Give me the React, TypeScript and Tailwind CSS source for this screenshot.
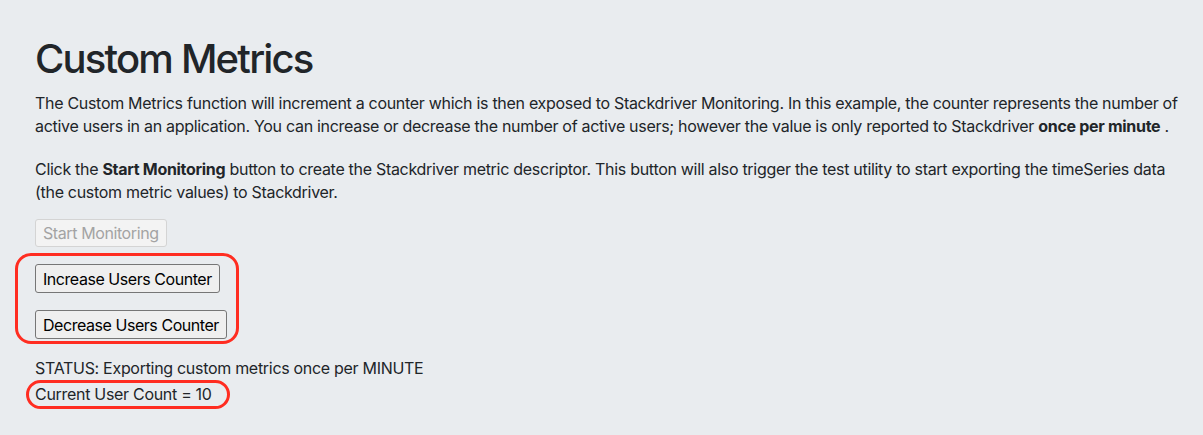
export default function App() {
  return (
    <div className="min-h-[435px] bg-[#e9ecef] pl-[35px] pr-[14px] pt-[35px] font-['Inter',sans-serif] text-[#212529]">
      <h1 className="mb-[9px] text-[40px] font-medium leading-[48px] tracking-[-1.8px]">Custom Metrics</h1>

      <p className="mb-[20px] text-[16px] leading-[23px] tracking-[-0.3px]">
        The Custom Metrics function will increment a counter which is then exposed to Stackdriver Monitoring. In this
        example, the counter represents the number of active users in an application. You can increase or decrease the
        number of active users; however the value is only reported to Stackdriver <b>once per minute</b> .
      </p>

      <p className="mb-[15px] text-[16px] leading-[23px] tracking-[-0.3px]">
        Click the <b>Start Monitoring</b> button to create the Stackdriver metric descriptor. This button will also
        trigger the test utility to start exporting the timeSeries data (the custom metric values) to Stackdriver.
      </p>

      <button
        disabled
        className="block h-[28px] rounded-[3px] border border-[#d4d4d4] bg-[#f3f3f3] px-[7px] text-[16px] tracking-[-0.4px] text-[#a3a3a3]"
      >
        Start Monitoring
      </button>

      {/* annotation box round the counter buttons */}
      <div className="-ml-[20px] mt-[6px] flex w-fit flex-col gap-[17px] rounded-[16px] border-[3px] border-[#ff2d21] pb-[2px] pl-[17px] pr-[9px] pt-[8px]">
        <button className="h-[29px] w-fit rounded-[3px] border border-[#767676] bg-[#efefef] px-[7px] text-[16px] tracking-[-0.45px] text-black">
          Increase Users Counter
        </button>
        <button className="h-[29px] w-fit rounded-[3px] border border-[#767676] bg-[#efefef] px-[7px] text-[16px] tracking-[-0.45px] text-black">
          Decrease Users Counter
        </button>
      </div>

      <div className="mt-[12px] text-[16px] leading-[24px] tracking-[-0.3px]">
        STATUS: Exporting custom metrics once per MINUTE
      </div>
      <div className="-ml-[9px] w-fit rounded-[16px] border-[3px] border-[#ff2d21] pl-[6px] pr-[15px] text-[16px] leading-[23px] tracking-[-0.3px]">
        Current User Count = 10
      </div>
    </div>
  );
}
